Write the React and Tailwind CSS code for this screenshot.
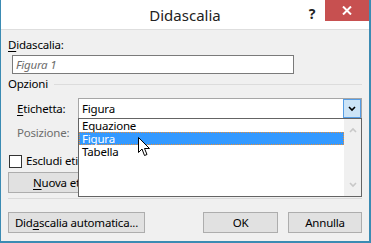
import React from "react";

const font = { fontFamily: '"Noto Sans", "Open Sans", sans-serif' };

function Btn({ children, className = "" }) {
  return (
    <div className={`h-[21px] border border-[#adadad] bg-[#e1e1e1] flex items-center justify-center text-black ${className}`}>
      {children}
    </div>
  );
}

function Chevron({ up, className = "" }) {
  return (
    <svg width="8" height="6" viewBox="0 0 8 6" className={className}>
      <path d={up ? "M1 5 L4 2 L7 5" : "M1 1 L4 4 L7 1"} fill="none" stroke="currentColor" strokeWidth="1.6" />
    </svg>
  );
}

function Cursor() {
  return (
    <svg width="13" height="20" viewBox="0 0 13 20" className="absolute left-[59px] top-[18px]">
      <path
        d="M0.5 0.5 L0.5 15.5 L4 12 L6.5 18.5 L9 17.5 L6.5 11.5 L11.5 11.5 Z"
        fill="#fff"
        stroke="#000"
        strokeWidth="1"
      />
    </svg>
  );
}

export default function App() {
  return (
    <div
      className="w-[371px] h-[243px] flex flex-col border-l border-r-2 border-b-2 border-[#3b8bb3] bg-[#f0f0f0] text-[11.5px] tracking-[-0.2px] text-black leading-4"
      style={font}
    >
      {/* title bar */}
      <div className="h-[30px] bg-white border-b border-[#dedede] flex">
        <div className="flex-1" />
        <div className="pt-[5px] text-[15px] tracking-normal leading-5 text-[#222]">Didascalia</div>
        <div className="flex-1 flex justify-end items-start">
          <div className="w-[26px] pt-[4px] text-center text-[14px] font-bold leading-5 text-[#222]">?</div>
          <div className="w-[44px] h-[21px] bg-[#c75050] flex items-center justify-center">
            <svg width="10" height="9" viewBox="0 0 10 9">
              <path d="M1 0.5 L9 8.5 M9 0.5 L1 8.5" stroke="#fff" strokeWidth="2" />
            </svg>
          </div>
        </div>
      </div>

      {/* body */}
      <div className="flex-1 flex flex-col px-[7px]">
        <div className="mt-[7px] h-4">
          <span className="underline underline-offset-2">D</span>idascalia:
        </div>
        <div className="mt-[2px] ml-[4px] w-[282px] h-[19px] border border-[#7a7a7a] bg-white pl-[3px] flex items-center italic text-[#6d6d6d]">
          Figura 1
        </div>

        <div className="mt-[2px] h-4 flex items-center gap-[6px]">
          <span>Opzioni</span>
          <div className="flex-1 h-px bg-[#dcdcdc]" />
        </div>

        <div className="mt-[6px] flex items-center">
          <div className="w-[70px] pl-[9px]">
            <span className="underline underline-offset-2">E</span>tichetta:
          </div>
          <div className="relative w-[284px] h-[21px] border border-[#a6a6a6] bg-white flex">
            <div className="flex-1 pl-[3px] flex items-center">Figura</div>
            <div className="w-[18px] border border-[#569de5] bg-[#cce4f7] flex items-center justify-center text-black">
              <Chevron />
            </div>

            {/* dropdown list */}
            <div className="absolute left-[-1px] top-full w-[284px] h-[79px] border border-[#646464] bg-white flex z-10">
              <div className="flex-1 flex flex-col leading-[13px] relative">
                <div className="h-[13px] pl-[3px]">Equazione</div>
                <div className="h-[13px] pl-[2px] bg-[#3399ff] text-white border border-dotted border-[#e8903a] flex items-center">Figura</div>
                <div className="h-[13px] pl-[3px]">Tabella</div>
                <Cursor />
              </div>
              <div className="w-[17px] bg-[#f0f0f0] flex flex-col items-center justify-between py-[8px] text-[#c8c8c8]">
                <Chevron up />
                <Chevron />
              </div>
            </div>
          </div>
        </div>

        <div className="mt-[6px] h-4 w-[70px] pl-[9px] text-[#6d6d6d]">Posizione:</div>

        <div className="mt-[12px] h-4 flex items-center gap-[4px] pl-px">
          <div className="w-[13px] h-[13px] border border-[#333] bg-white shrink-0" />
          <span className="w-[52px] overflow-hidden whitespace-nowrap">Escludi etichetta</span>
        </div>

        <div className="mt-[3px] w-[70px] overflow-hidden">
          <Btn className="w-[148px]">
            <span className="w-[148px] pl-[24px] whitespace-nowrap">
              <span className="underline underline-offset-2">N</span>uova etichetta...
            </span>
          </Btn>
        </div>

        <div className="mt-[5px] h-px bg-[#dadada]" />

        <div className="mt-[13px] flex justify-between">
          <Btn className="w-[137px]">
            <span>
              Did<span className="underline underline-offset-2">a</span>scalia automatica...
            </span>
          </Btn>
          <div className="flex gap-[10px]">
            <Btn className="w-[75px]">OK</Btn>
            <Btn className="w-[74px]">Annulla</Btn>
          </div>
        </div>
      </div>
    </div>
  );
}
